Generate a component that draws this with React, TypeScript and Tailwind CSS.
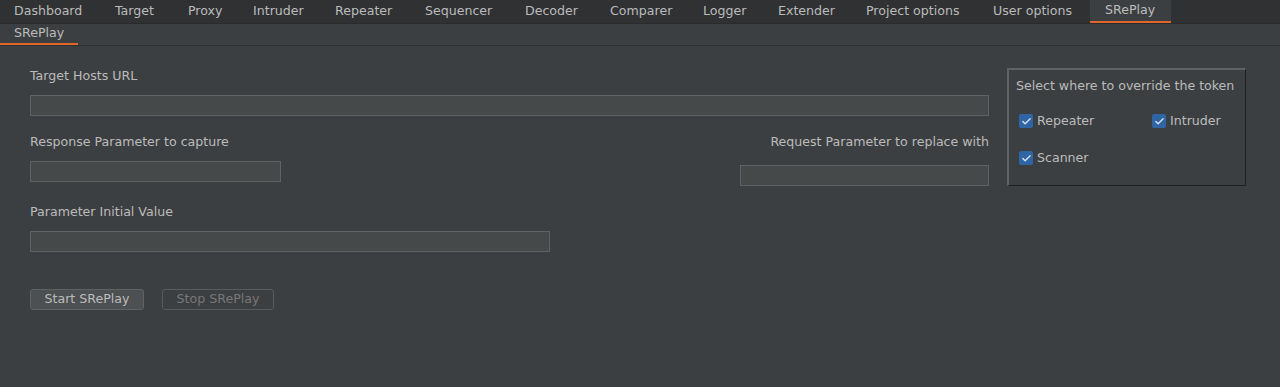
import { Check } from 'lucide-react';

const tabs: [string, string][] = [
  ['Dashboard', 'w-[100px] pl-[14px]'],
  ['Target', 'w-[73px] pl-[15px]'],
  ['Proxy', 'w-[65px] pl-[15px]'],
  ['Intruder', 'w-[82px] pl-[15px]'],
  ['Repeater', 'w-[90px] pl-[15px]'],
  ['Sequencer', 'w-[100px] pl-[15px]'],
  ['Decoder', 'w-[85px] pl-[15px]'],
  ['Comparer', 'w-[93px] pl-[15px]'],
  ['Logger', 'w-[75px] pl-[15px]'],
  ['Extender', 'w-[88px] pl-[15px]'],
  ['Project options', 'w-[127px] pl-[15px]'],
  ['User options', 'w-[112px] pl-[15px]'],
  ['SRePlay', 'w-[81px] pl-[15px]'],
];

function Field({ className = '' }: { className?: string }) {
  return <div className={`h-[21px] bg-[#45494a] border border-[#5e6263] ${className}`} />;
}

function Box({ label }: { label: string }) {
  return (
    <div className="flex items-center gap-[4px]">
      <span className="w-[14px] h-[14px] rounded-[2px] bg-[#2f65a4] flex items-center justify-center">
        <Check className="w-[11px] h-[11px] text-[#d6e2f0]" strokeWidth={3} />
      </span>
      <span>{label}</span>
    </div>
  );
}

export default function App() {
  return (
    <div
      className="w-[1280px] h-[387px] bg-[#3c3f41] text-[#bbbbbb] text-[12.6px] overflow-hidden"
      style={{ fontFamily: '"DejaVu Sans", sans-serif' }}
    >
      {/* Top tabs */}
      <div className="flex h-[24px] bg-[#2f3133] border-b border-[#2a2b2c]">
        {tabs.map(([t, w]) => (
          <div
            key={t}
            className={`${w} shrink-0 flex items-center leading-none ${
              t === 'SRePlay' ? 'bg-[#3c3f41] border-b-2 border-[#e0662c]' : ''
            }`}
          >
            {t}
          </div>
        ))}
      </div>

      {/* Sub tabs */}
      <div className="flex h-[22px] border-b border-[#2f3133]">
        <div className="w-[78px] pl-[14px] flex items-center border-b-2 border-[#e0662c] leading-none">SRePlay</div>
      </div>

      {/* Content */}
      <div className="flex pl-[30px] pt-[22px] gap-[18px]">
        <div className="w-[959px] flex flex-col">
          <div className="leading-[16px]">Target Hosts URL</div>
          <Field className="mt-[11px]" />
          <div className="flex justify-between mt-[18px]">
            <div className="flex flex-col">
              <div className="leading-[16px]">Response Parameter to capture</div>
              <Field className="mt-[11px] w-[251px]" />
            </div>
            <div className="flex flex-col items-end">
              <div className="leading-[16px]">Request Parameter to replace with</div>
              <Field className="mt-[15px] w-[249px]" />
            </div>
          </div>
          <div className="leading-[16px] mt-[18px]">Parameter Initial Value</div>
          <Field className="mt-[11px] w-[520px]" />
          <div className="flex gap-[18px] mt-[37px]">
            <button className="w-[114px] h-[21px] rounded-[3px] bg-[#4c5052] border border-[#5e6263] text-[#bbbbbb] leading-none">
              Start SRePlay
            </button>
            <button className="w-[112px] h-[21px] rounded-[3px] bg-[#3c3f41] border border-[#585b5d] text-[#777777] leading-none">
              Stop SRePlay
            </button>
          </div>
        </div>

        <div className="w-[239px] h-[118px] border-t-2 border-l-2 border-[#5f6264] border-r border-b border-r-[#1f2021] border-b-[#1f2021] pl-[7px] pt-[8px]">
          <div className="leading-[16px]">Select where to override the token</div>
          <div className="grid grid-cols-[133px_1fr] gap-y-[18px] mt-[18px] pl-[3px]">
            <Box label="Repeater" />
            <Box label="Intruder" />
            <Box label="Scanner" />
          </div>
        </div>
      </div>
    </div>
  );
}
